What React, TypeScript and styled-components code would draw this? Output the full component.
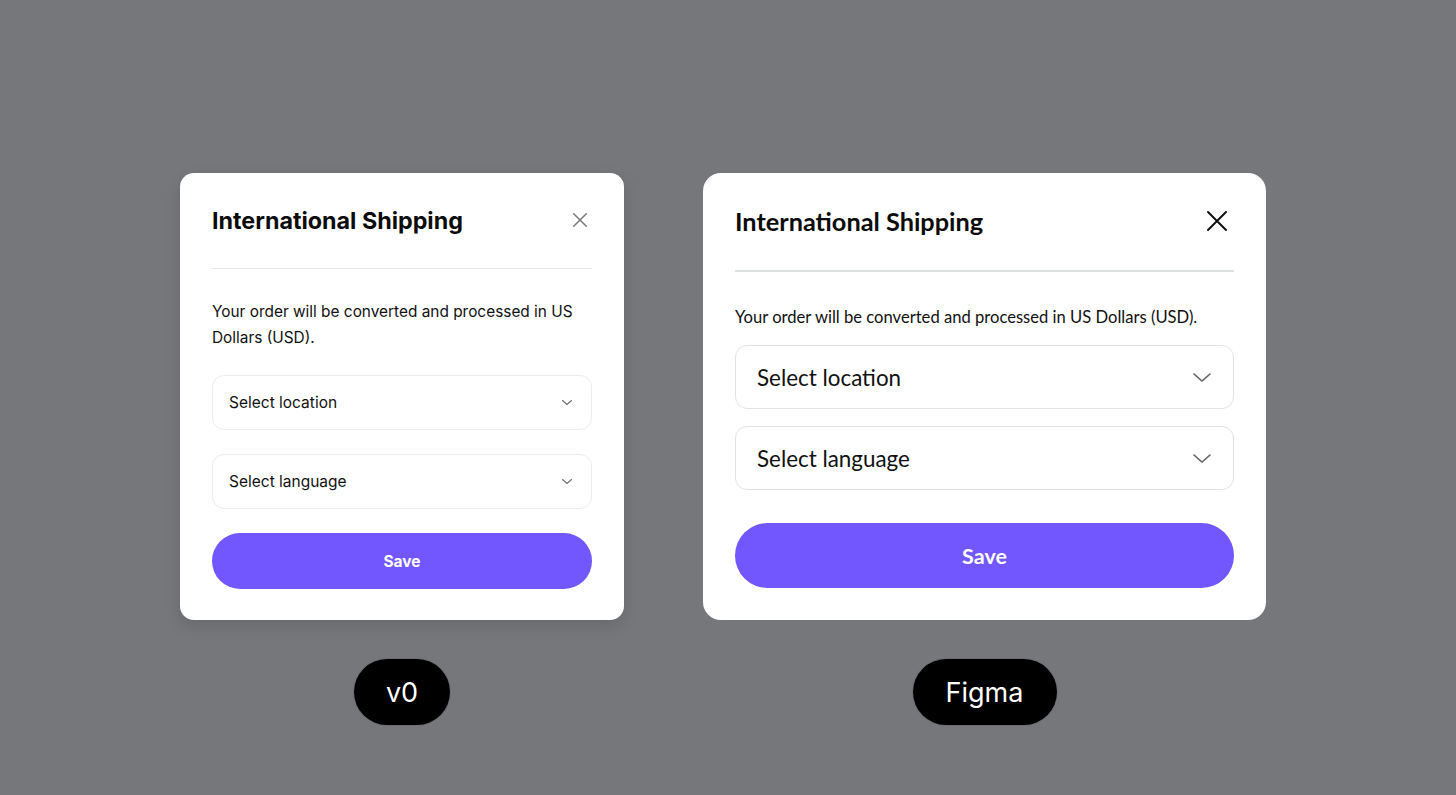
import React from "react";
import styled, { createGlobalStyle, css } from "styled-components";

const Global = createGlobalStyle`
  html, body { margin: 0; padding: 0; }
  body { background: #76777a; font-family: "Inter", "Liberation Sans", sans-serif; }
  * { box-sizing: border-box; }
`;

type V = { $v: "v0" | "figma" };

const Page = styled.div`
  height: 795px;
  display: flex;
  align-items: flex-start;
  padding: 173px 0 0 180px;
  gap: 79px;
`;

const Column = styled.div`
  display: flex;
  flex-direction: column;
  align-items: center;
  gap: 39px;
`;

const Card = styled.div<V>`
  background: #ffffff;
  display: flex;
  flex-direction: column;
  height: 447px;
  ${(p) =>
    p.$v === "v0"
      ? css`
          width: 444px;
          border-radius: 14px;
          padding: 32px 32px 31px;
          box-shadow: 0 6px 16px rgba(0, 0, 0, 0.12);
          font-family: "Inter", "Liberation Sans", sans-serif;
        `
      : css`
          width: 563px;
          border-radius: 18px;
          padding: 32px 32px 32px;
          font-family: "Lato", "Open Sans", sans-serif;
        `}
`;

const Header = styled.div<V>`
  display: flex;
  align-items: center;
  justify-content: space-between;
  height: ${(p) => (p.$v === "v0" ? "30px" : "32px")};
  padding-right: ${(p) => (p.$v === "v0" ? "5px" : "7px")};
`;

const Title = styled.h2<V>`
  margin: 0;
  color: #0c0c0c;
  font-weight: 700;
  letter-spacing: 0;
  font-size: ${(p) => (p.$v === "v0" ? "23.3px" : "25.3px")};
`;

const CloseBtn = styled.button`
  background: none;
  border: none;
  padding: 0;
  display: flex;
  cursor: pointer;
`;

const Divider = styled.hr<V>`
  margin: 0;
  border: none;
  ${(p) =>
    p.$v === "v0"
      ? css`
          height: 1px;
          background: #e6e6e6;
          margin-top: 33px;
        `
      : css`
          height: 2px;
          background: #dde1e1;
          margin-top: 33px;
        `}
`;

const Text = styled.p<V>`
  margin: 0;
  color: #111;
  ${(p) =>
    p.$v === "v0"
      ? css`
          font-size: 15.4px;
          line-height: 26px;
          margin-top: 30px;
          margin-bottom: 24px;
        `
      : css`
          font-size: 16.6px;
          line-height: 22px;
          margin-top: 34px;
          margin-bottom: 17px;
        `}
`;

const Fields = styled.div<V>`
  display: flex;
  flex-direction: column;
  gap: ${(p) => (p.$v === "v0" ? "24px" : "17px")};
`;

const Select = styled.div<V>`
  display: flex;
  align-items: center;
  justify-content: space-between;
  background: #fff;
  color: #111;
  ${(p) =>
    p.$v === "v0"
      ? css`
          height: 55px;
          border: 1px solid #ececec;
          border-radius: 12px;
          padding: 0 19px 0 16px;
          font-size: 15.5px;
        `
      : css`
          height: 64px;
          border: 1px solid #e3e3e3;
          border-radius: 12px;
          padding: 0 22px 0 21px;
          font-size: 22.4px;
        `}
`;

const SaveButton = styled.button<V>`
  border: none;
  background: #7357fe;
  color: #fff;
  font-family: inherit;
  font-weight: 700;
  cursor: pointer;
  width: 100%;
  ${(p) =>
    p.$v === "v0"
      ? css`
          height: 56px;
          border-radius: 28px;
          font-size: 15.5px;
          margin-top: 24px;
        `
      : css`
          height: 65px;
          border-radius: 33px;
          font-size: 21.5px;
          margin-top: 33px;
        `}
`;

const Label = styled.div<V>`
  height: 66px;
  border-radius: 33px;
  background: #000;
  color: #fff;
  display: flex;
  align-items: center;
  justify-content: center;
  font-family: "Inter", "Liberation Sans", sans-serif;
  font-size: 27px;
  font-weight: 400;
  width: ${(p) => (p.$v === "v0" ? "96px" : "144px")};
  box-shadow: 0 0 0 1px rgba(0, 0, 0, 0.08);
`;

const Close = ({ v }: { v: "v0" | "figma" }) => {
  const s = v === "v0" ? 14 : 20;
  return (
    <svg width={s} height={s} viewBox="0 0 20 20" fill="none">
      <path
        d="M1 1L19 19M19 1L1 19"
        stroke={v === "v0" ? "#7a7a7a" : "#0c0c0c"}
        strokeWidth={v === "v0" ? 2.2 : 1.9}
        strokeLinecap="round"
      />
    </svg>
  );
};

const Chevron = ({ v }: { v: "v0" | "figma" }) => {
  const w = v === "v0" ? 10 : 18;
  return (
    <svg width={w} height={w / 2} viewBox="0 0 20 10" fill="none" style={{ overflow: "visible" }}>
      <path
        d="M1 1L10 9L19 1"
        stroke={v === "v0" ? "#6e6e6e" : "#6a6a6a"}
        strokeWidth={v === "v0" ? 2.2 : 1.6}
        strokeLinecap="round"
        strokeLinejoin="round"
      />
    </svg>
  );
};

const Dialog = ({ v }: { v: "v0" | "figma" }) => (
  <Card $v={v}>
    <Header $v={v}>
      <Title $v={v}>International Shipping</Title>
      <CloseBtn aria-label="Close">
        <Close v={v} />
      </CloseBtn>
    </Header>
    <Divider $v={v} />
    <Text $v={v}>Your order will be converted and processed in US Dollars (USD).</Text>
    <Fields $v={v}>
      <Select $v={v}>
        <span>Select location</span>
        <Chevron v={v} />
      </Select>
      <Select $v={v}>
        <span>Select language</span>
        <Chevron v={v} />
      </Select>
    </Fields>
    <SaveButton $v={v}>Save</SaveButton>
  </Card>
);

export default function App() {
  return (
    <>
      <Global />
      <Page>
        <Column>
          <Dialog v="v0" />
          <Label $v="v0">v0</Label>
        </Column>
        <Column>
          <Dialog v="figma" />
          <Label $v="figma">Figma</Label>
        </Column>
      </Page>
    </>
  );
}
